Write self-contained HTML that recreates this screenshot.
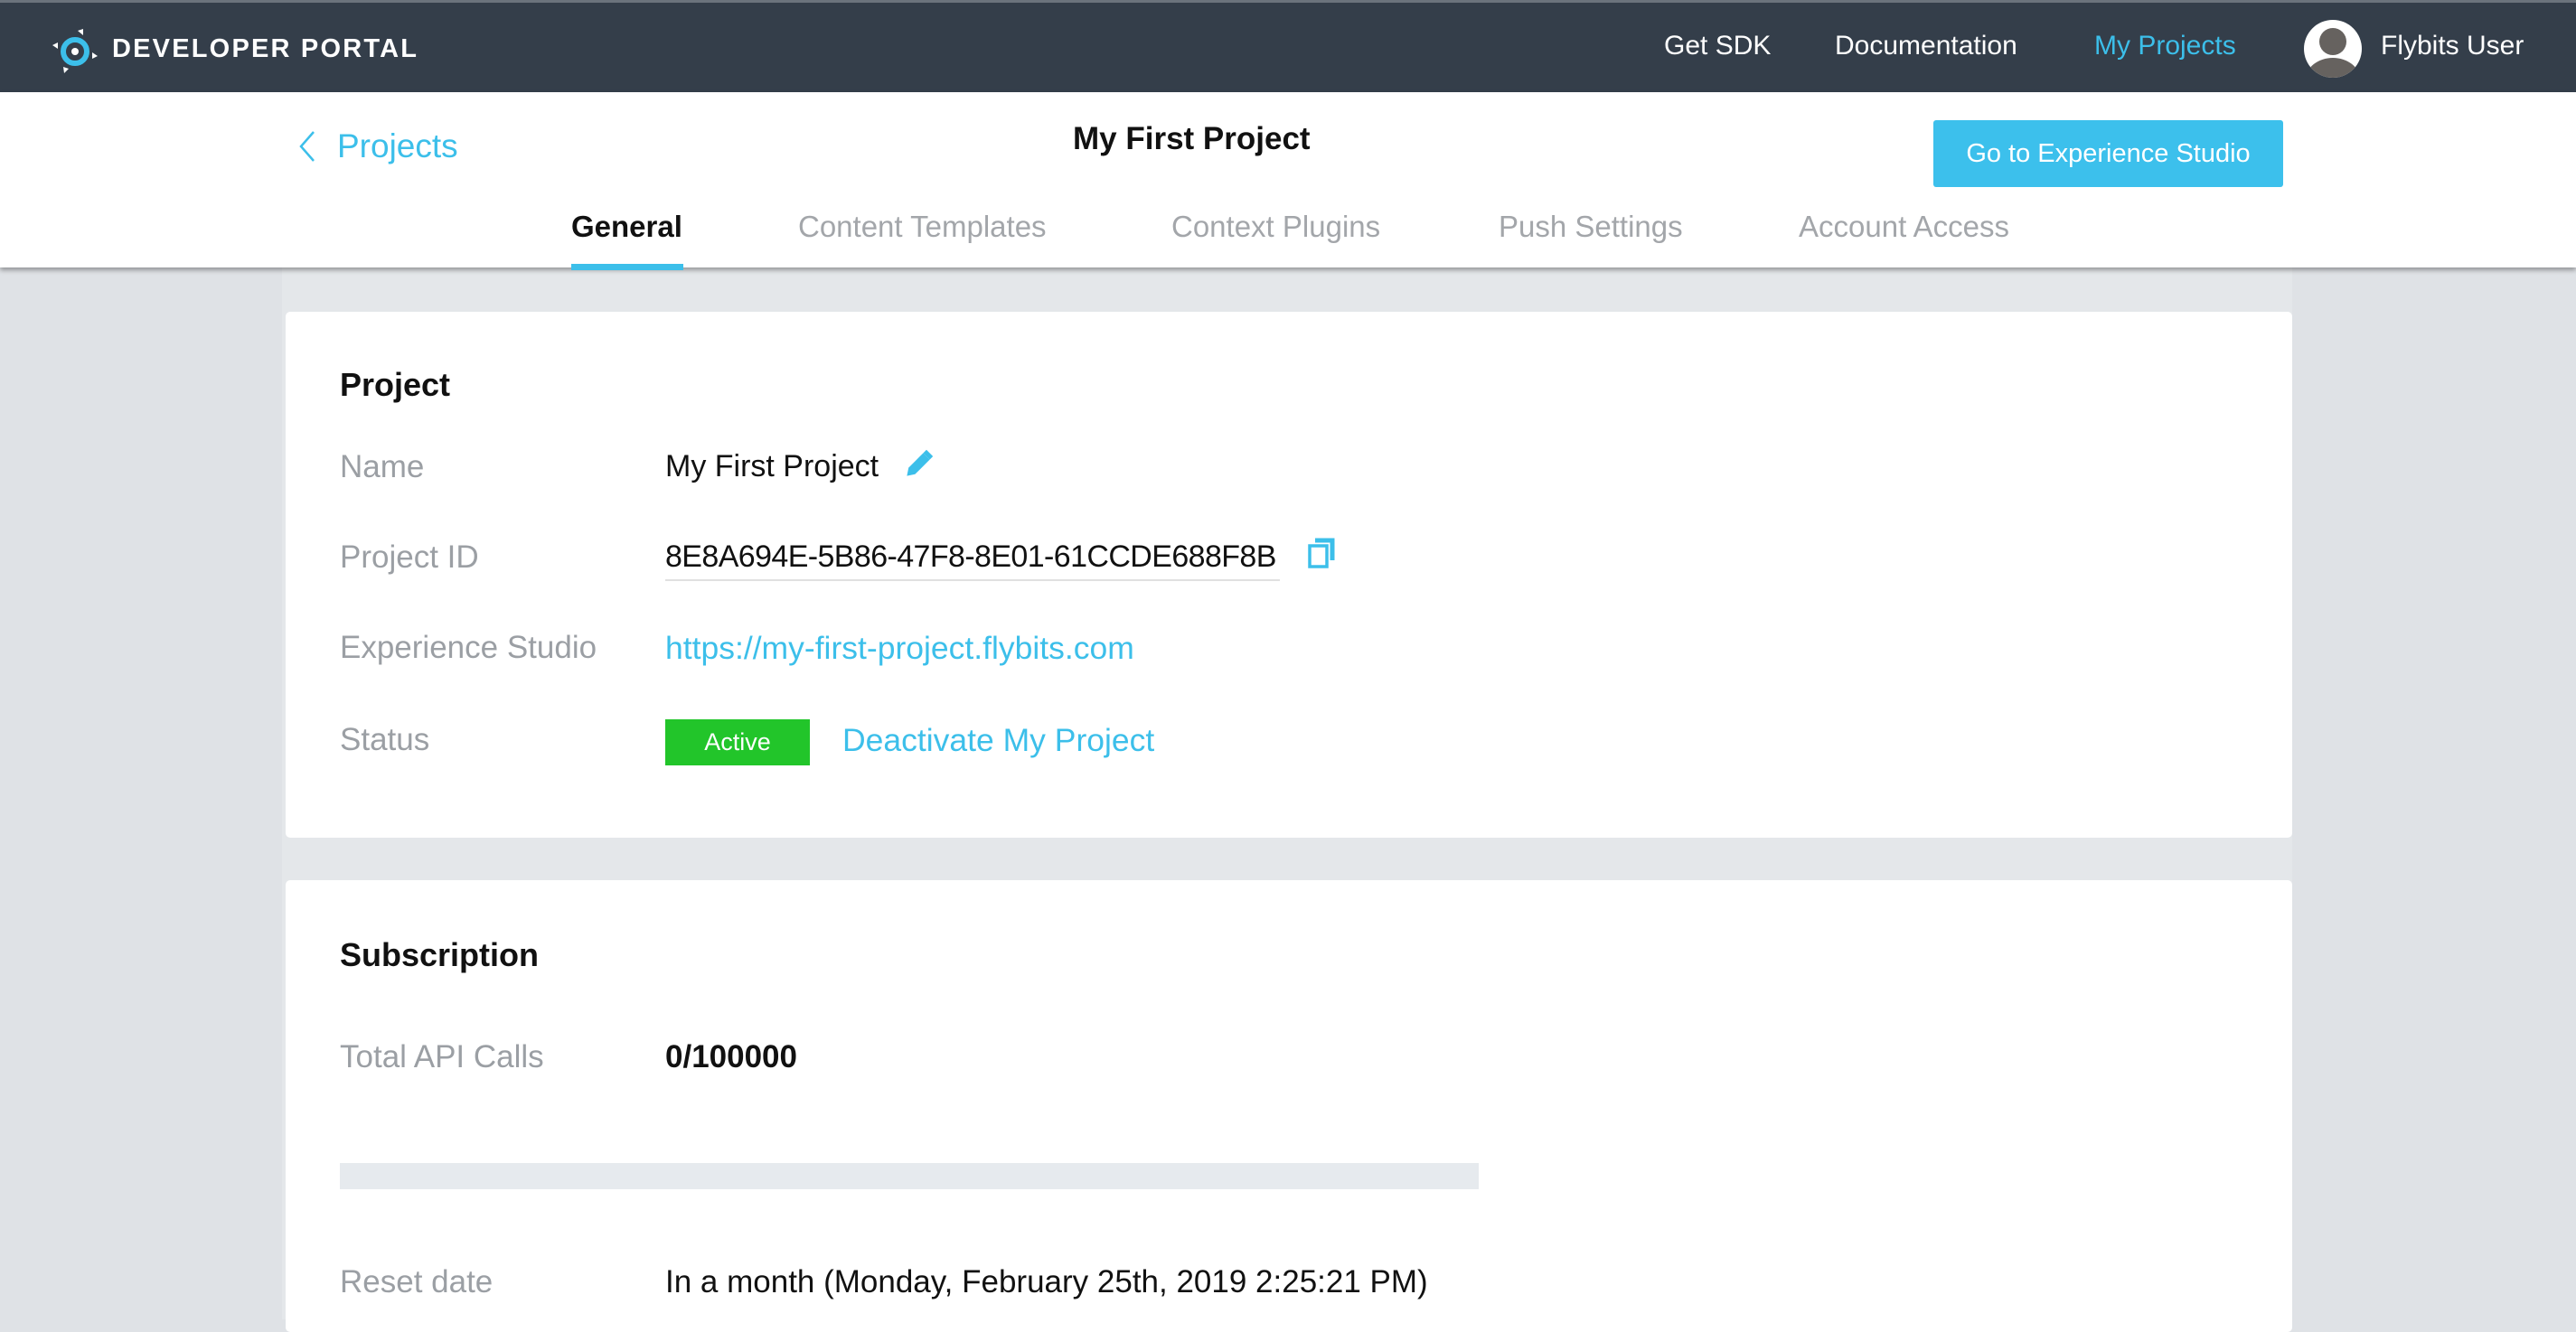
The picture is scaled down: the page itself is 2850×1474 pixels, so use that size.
<!DOCTYPE html>
<html><head><meta charset="utf-8"><style>
*{margin:0;padding:0;box-sizing:border-box}
body{width:2850px;height:1460px;overflow:hidden;background:#dfe2e6;font-family:"Liberation Sans",sans-serif;position:relative}
.a{position:absolute;white-space:nowrap}
.nav{position:absolute;left:0;top:0;width:2850px;height:102px;background:#343e4a;border-top:3px solid #6b737c}
.hdr{position:absolute;left:0;top:102px;width:2850px;height:194px;background:#fff;box-shadow:0 3px 5px rgba(0,0,0,.35);z-index:2}
.col{position:absolute;left:312px;top:296px;width:2224px;height:1164px;background:#e4e7ea}
.card{position:absolute;left:316px;width:2220px;background:#fff;border-radius:5px}
.lbl{color:#9b9fa4;font-size:35px}
.val{color:#111;font-size:34px}
.blue{color:#3cbfea}
.tab{font-size:33px;color:#a3a6aa;top:232px;z-index:3}
.z{z-index:3}
</style></head><body>
<div class="nav"></div>
<svg class="a" style="left:56px;top:28px" width="56" height="56" viewBox="0 0 56 56">
<circle cx="27" cy="29" r="13" fill="none" stroke="#3cbfea" stroke-width="6"/>
<circle cx="27" cy="29" r="4" fill="#fff"/>
<polygon points="30,6 36,4 36,11" fill="#fff"/>
<polygon points="2,22 8,19 8,26" fill="#fff"/>
<polygon points="46,30 52,34 46,37" fill="#fff"/>
<polygon points="14,46 20,48 15,53" fill="#fff"/>
</svg>
<div class="a" style="left:124px;top:38px;color:#fff;font-weight:bold;font-size:29px;letter-spacing:2.2px">DEVELOPER PORTAL</div>
<div class="a" style="left:1841px;top:34px;color:#fff;font-size:30px">Get SDK</div>
<div class="a" style="left:2030px;top:34px;color:#fff;font-size:30px">Documentation</div>
<div class="a" style="left:2317px;top:34px;color:#3cbfea;font-size:30px">My Projects</div>
<svg class="a" style="left:2549px;top:22px" width="64" height="64" viewBox="0 0 64 64">
<defs><clipPath id="c"><circle cx="32" cy="32" r="32"/></clipPath></defs>
<circle cx="32" cy="32" r="32" fill="#fff"/>
<g clip-path="url(#c)" fill="#66625f"><circle cx="32" cy="24" r="15"/><ellipse cx="32" cy="66" rx="30" ry="24"/></g>
</svg>
<div class="a" style="left:2634px;top:34px;color:#fff;font-size:30px">Flybits User</div>
<div class="hdr"></div>
<svg class="a z" style="left:330px;top:144px" width="20" height="36" viewBox="0 0 20 36"><polyline points="17,2 3,18 17,34" fill="none" stroke="#3cbfea" stroke-width="2.5"/></svg>
<div class="a blue z" style="left:373px;top:141px;font-size:37px">Projects</div>
<div class="a z" style="left:1187px;top:134px;font-size:35px;font-weight:bold;color:#111">My First Project</div>
<div class="a z" style="left:2139px;top:133px;width:387px;height:74px;background:#3cc0ec;border-radius:3px;color:#fff;font-size:29px;text-align:center;line-height:74px">Go to Experience Studio</div>
<div class="a tab" style="left:632px;color:#111;font-weight:bold">General</div>
<div class="a z" style="left:632px;top:292px;width:124px;height:7px;background:#3cbfea"></div>
<div class="a tab" style="left:883px">Content Templates</div>
<div class="a tab" style="left:1296px">Context Plugins</div>
<div class="a tab" style="left:1658px">Push Settings</div>
<div class="a tab" style="left:1990px">Account Access</div>
<div class="col"></div>
<div class="card" style="top:345px;height:582px"></div>
<div class="card" style="top:974px;height:500px"></div>
<div class="a" style="left:376px;top:405px;font-size:36px;font-weight:bold;color:#111">Project</div>
<div class="a lbl" style="left:376px;top:497px">Name</div>
<div class="a val" style="left:736px;top:497px">My First Project</div>
<svg class="a" style="left:998px;top:496px" width="36" height="36" viewBox="0 0 20 20"><path d="M3 17 L4 12 L13 3 L17 7 L8 16 Z" fill="#3cbfea"/><path d="M13 3 L15 1 L19 5 L17 7Z" fill="#3cbfea"/></svg>
<div class="a lbl" style="left:376px;top:597px">Project ID</div>
<div class="a val" style="left:736px;top:597px;letter-spacing:-0.6px">8E8A694E-5B86-47F8-8E01-61CCDE688F8B</div>
<div class="a" style="left:736px;top:641px;width:680px;height:2px;background:#e0e0e0"></div>
<svg class="a" style="left:1446px;top:592px" width="34" height="40" viewBox="0 0 34 40"><rect x="3" y="12" width="19" height="23" fill="none" stroke="#3cbfea" stroke-width="3.5"/><path d="M9 6 H28 V28" fill="none" stroke="#3cbfea" stroke-width="5"/></svg>
<div class="a lbl" style="left:376px;top:697px">Experience Studio</div>
<div class="a blue" style="left:736px;top:697px;font-size:35.5px">https://my-first-project.flybits.com</div>
<div class="a lbl" style="left:376px;top:799px">Status</div>
<div class="a" style="left:736px;top:796px;width:160px;height:51px;background:#22c52a;color:#fff;font-size:27px;text-align:center;line-height:51px">Active</div>
<div class="a blue" style="left:932px;top:799px;font-size:35.5px">Deactivate My Project</div>
<div class="a" style="left:376px;top:1036px;font-size:36px;font-weight:bold;color:#111">Subscription</div>
<div class="a lbl" style="left:376px;top:1150px">Total API Calls</div>
<div class="a val" style="left:736px;top:1150px;font-weight:bold;font-size:35px">0/100000</div>
<div class="a" style="left:376px;top:1287px;width:1260px;height:29px;background:#e6eaee"></div>
<div class="a lbl" style="left:376px;top:1399px">Reset date</div>
<div class="a val" style="left:736px;top:1399px;font-size:35px">In a month (Monday, February 25th, 2019 2:25:21 PM)</div>
</body></html>
